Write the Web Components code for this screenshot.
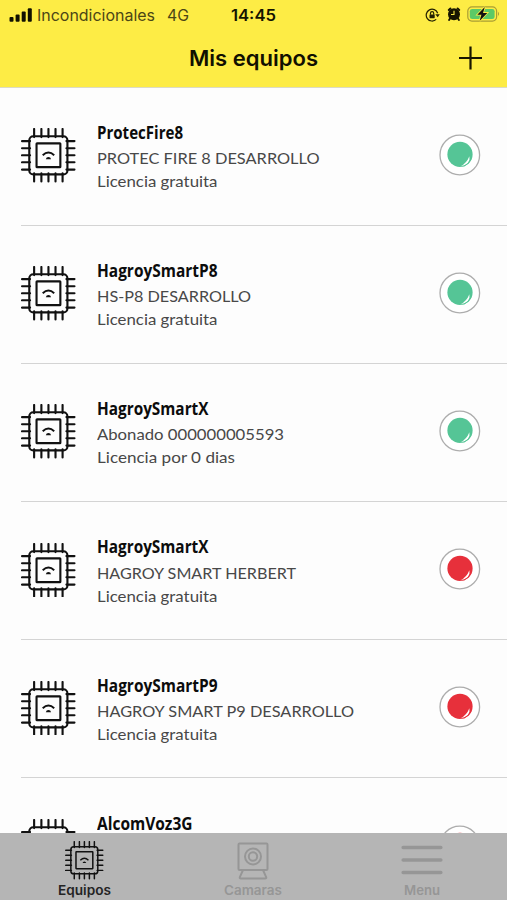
<!DOCTYPE html>
<html lang="es">
<head>
<meta charset="utf-8">
<title>Mis equipos</title>
<style>
body{margin:0;background:#fdfdfd;font-family:Inter,sans-serif}
</style>
</head>
<body>
<device-app></device-app>
<script>
const define = (name, html, after) => customElements.define(name, class extends HTMLElement {
  connectedCallback() {
    if (this.shadowRoot) return;
    this.attachShadow({mode: 'open'}).innerHTML = typeof html === 'function' ? html(this) : html;
    if (after) after(this);
  }
});

/* One line of text, condensed or widened to the width in its "w" attribute. */
define('fit-text', `<style>
:host{display:block;white-space:nowrap}
span{display:inline-block;transform-origin:0 50%}
</style><span><slot></slot></span>`, el => {
  const s = el.shadowRoot.querySelector('span');
  const w = +el.getAttribute('w');
  el.style.width = w + 'px';
  s.style.transform = `scaleX(${w / s.getBoundingClientRect().width})`;
});

define('chip-icon', `<style>:host{display:block}svg{display:block;width:100%;height:100%}</style>
<svg viewBox="0 0 54 54" fill="none" stroke="#111" stroke-width="2.1">
<path stroke-linecap="round" d="M13 1v8M20.2 1v8M27.2 1v8M34.2 1v8M41.2 1v8M13 45v8M20.2 45v8M27.2 45v8M34.2 45v8M41.2 45v8M1 13h8M1 20h8M1 27h8M1 34h8M1 41.2h8M45 13h8M45 20h8M45 27h8M45 34h8M45 41.2h8"/>
<rect x="8.2" y="8.2" width="37.8" height="37.8" rx="4"/>
<rect x="15.4" y="15.2" width="23.6" height="23.6" rx=".5"/>
<path d="M21.5 27q5.7-5.4 11.4 0" stroke-width="1.9"/>
<path d="M24.6 31q.4-2.2 2.6-2.2t2.6 2.2z" fill="#111" stroke="none"/>
</svg>`);

define('status-dot', el => `<style>:host{display:block;width:42px;height:42px}svg{display:block}</style>
<svg width="42" height="42" viewBox="0 0 42 42">
<circle cx="20.8" cy="21" r="19.8" fill="#fff" stroke="#adadad" stroke-width="1.3"/>
<circle cx="21" cy="20.4" r="12.6" fill="${el.getAttribute('color')}"/>
<path d="M21.3 32.6Q27.6 29.2 30.4 22.2Q32 30 21.3 32.6Z" fill="#fff"/>
<path d="M24.6 32.5Q30.3 29.8 32.4 24.6" fill="none" stroke="${el.getAttribute('color')}" stroke-width=".8"/>
</svg>`);

define('status-bar', `<style>
:host{display:grid;grid-template-columns:1fr auto 1fr;align-items:center;height:30px;font-size:15.5px;color:#151300}
div{display:flex;align-items:center}
.l{padding-left:9px;color:#4b4615}
.l svg{margin-right:5px}
.g{margin-left:12px}
.c{font-weight:600}
.r{justify-content:flex-end;padding-right:7px}
svg{display:block;flex:none}
</style>
<div class="l"><svg width="23" height="14" viewBox="0 0 23 14" fill="#111000"><rect x="0.5" y="9" width="4" height="4.7" rx="1"/><rect x="6.6" y="6.5" width="4" height="7.2" rx="1"/><rect x="12.7" y="3.5" width="4" height="10.2" rx="1"/><rect x="18.8" y="0.3" width="4" height="13.4" rx="1"/></svg>
<fit-text w="118">Incondicionales</fit-text><fit-text class="g" w="22">4G</fit-text></div>
<div class="c"><fit-text w="45">14:45</fit-text></div>
<div class="r">
<svg width="15" height="14" viewBox="0 0 15 14" fill="none" stroke="#222000" stroke-width="1.2"><path d="M12.7 5.2A5.9 5.9 0 1 0 11.2 11.4"/><path d="M10.3 6.2h4.5l-2.1 3z" fill="#222000" stroke="none"/><rect x="4.5" y="6.5" width="5.2" height="3.7" rx=".6" fill="#222000" stroke="none"/><path d="M5.5 6.7V5.3a1.6 1.6 0 0 1 3.2 0v1.4"/></svg>
<svg style="margin:0 0 2px 7px" width="14" height="14" viewBox="0 0 14 14"><circle cx="7" cy="7.2" r="6" fill="#171500"/><path d="M1.8 3l1.6-1.5M12.2 3l-1.6-1.5M3 11.6l-.9 1.4M11 11.6l.9 1.4" stroke="#171500" stroke-width="1.9" stroke-linecap="round"/><path d="M7 3.8v3.7H4" stroke="#fdec45" stroke-width="1.1" fill="none"/></svg>
<svg style="margin:0 0 2px 6px" width="33" height="16" viewBox="0 0 33 16"><rect x=".8" y=".9" width="28.8" height="14.2" rx="4.2" fill="none" stroke="#a99d35" stroke-width="1.2"/><rect x="2.8" y="2.9" width="24.8" height="10.2" rx="2.4" fill="#5cc966"/><path d="M31 5.8q2 2.1 0 4.3z" fill="#a99d35"/><path d="M17.8 1L10.3 8.8h4.1l-1.8 6.1 7.7-8h-4.3z" fill="#111" stroke="#fdec45" stroke-width="1.6" paint-order="stroke"/></svg>
</div>`);

define('nav-header', `<style>
:host{display:block;background:#fdec45;border-bottom:1px solid #dcdbc4;box-sizing:border-box;height:88px;flex:none}
.b{display:grid;grid-template-columns:1fr auto 1fr;align-items:center;height:55px}
.h{grid-column:2;font-size:21.5px;font-weight:600;color:#111000}
svg{justify-self:end;margin-right:24px}
</style><status-bar></status-bar>
<div class="b"><fit-text class="h" w="129">Mis equipos</fit-text>
<svg width="25" height="24" viewBox="0 0 25 24" stroke="#181600" stroke-width="2.2"><path d="M1 12h23M12.5 .5v23"/></svg></div>`);

define('device-row', el => `<style>
:host{display:flex;box-sizing:border-box;height:138.2px;flex:none;margin-left:21px;padding-right:26px;border-bottom:1px solid #d4d4d4;align-items:flex-start}
chip-icon{width:54.5px;height:54.5px;margin-top:40.6px}
.t{flex:1;margin:32.4px 0 0 21px;color:#484848;font:16px/23.1px Lato,sans-serif}
.n{color:#0c0c0c;font:700 18px/24px "Open Sans",sans-serif;margin-bottom:2.2px}
status-dot{margin-top:46.3px}
</style>
<chip-icon></chip-icon>
<div class="t"><fit-text class="n" w="${el.getAttribute('nw')}">${el.getAttribute('name')}</fit-text>
${el.getAttribute('detail') ? `<fit-text w="${el.getAttribute('dw')}">${el.getAttribute('detail')}</fit-text>
<fit-text w="${el.getAttribute('lw')}">${el.getAttribute('licence')}</fit-text>` : ''}</div>
<status-dot color="${el.getAttribute('color')}"></status-dot>`);

define('tab-item', el => `<style>
:host{display:flex;flex-direction:column;align-items:center;justify-content:flex-start;flex:1;font-size:13px;line-height:16px;font-weight:600;color:${el.hasAttribute('active') ? '#242424' : '#969696'}}
.i{height:41px;display:flex;align-items:center;margin:7px 0 1px}
</style><div class="i"><slot></slot></div><fit-text w="${el.getAttribute('w')}">${el.getAttribute('label')}</fit-text>`);

define('tab-bar', `<style>
:host{display:flex;position:absolute;left:0;right:0;bottom:0;height:67px;background:#b5b5b5}
chip-icon{width:38.5px;height:38.5px}svg{display:block}
tab-item:last-child{padding-right:1px}
</style>
<tab-item active label="Equipos" w="53"><chip-icon></chip-icon></tab-item>
<tab-item label="Camaras" w="58"><svg width="34" height="38" viewBox="0 0 34 38" fill="none" stroke="#969696" stroke-width="2"><rect x="2.5" y="1.5" width="29" height="26.5" rx="1"/><circle cx="17" cy="14.5" r="8"/><circle cx="17" cy="14.5" r="4.2"/><path d="M7 28L3.8 35.2q-.3 1.3 1 1.3h24.4q1.3 0 1-1.3L27 28"/></svg></tab-item>
<tab-item label="Menu" w="36"><svg style="margin-bottom:1px" width="42" height="30" viewBox="0 0 42 30" stroke="#969696" stroke-width="3.6" stroke-linecap="round"><path d="M2.2 2.5h37.6M2.2 15h37.6M2.2 27.5h37.6"/></svg></tab-item>`);

const GREEN = '#55c596', RED = '#e7303b';
const rows = [
  ['ProtecFire8', 86, 'PROTEC FIRE 8 DESARROLLO', 222.5, 'Licencia gratuita', 120.5, GREEN],
  ['HagroySmartP8', 120.5, 'HS-P8 DESARROLLO', 154, 'Licencia gratuita', 120.5, GREEN],
  ['HagroySmartX', 111.5, 'Abonado 000000005593', 187, 'Licencia por 0 dias', 138, GREEN],
  ['HagroySmartX', 111.5, 'HAGROY SMART HERBERT', 199, 'Licencia gratuita', 120.5, RED],
  ['HagroySmartP9', 120.5, 'HAGROY SMART P9 DESARROLLO', 257, 'Licencia gratuita', 120.5, RED],
  ['AlcomVoz3G', 95.5, '', 0, '', 0, RED]
];
define('device-app', `<style>
:host{display:flex;flex-direction:column;position:relative;width:507px;height:900px;overflow:hidden;background:#fdfdfd}
nav-header{margin-bottom:-.6px}
</style><nav-header></nav-header>
${rows.map(r => `<device-row name="${r[0]}" nw="${r[1]}" detail="${r[2]}" dw="${r[3]}" licence="${r[4]}" lw="${r[5]}" color="${r[6]}"></device-row>`).join('')}
<tab-bar></tab-bar>`);
</script>
</body>
</html>
